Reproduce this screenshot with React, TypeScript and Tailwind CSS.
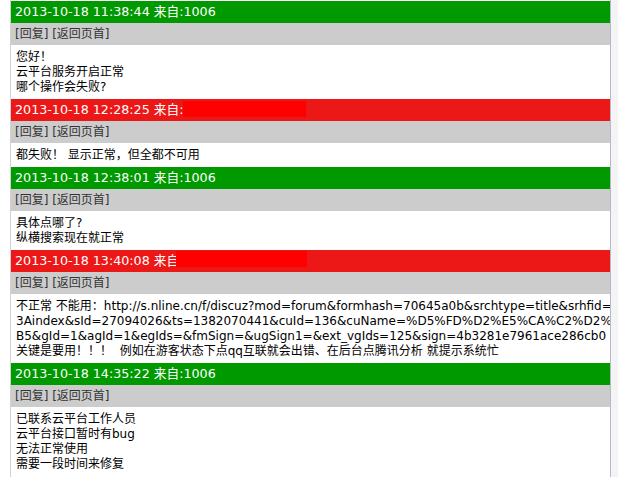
const posts = [
  {
    time: '2013-10-18 11:38:44',
    from: '1006',
    color: 'green',
    lines: ['您好！', '云平台服务开启正常', '哪个操作会失败?'],
  },
  {
    time: '2013-10-18 12:28:25',
    from: '',
    color: 'red',
    mask: 'left-[172px] top-[2px] w-[123px]',
    lines: ['都失败！ 显示正常，但全都不可用'],
  },
  {
    time: '2013-10-18 12:38:01',
    from: '1006',
    color: 'green',
    lines: ['具体点哪了?', '纵横搜索现在就正常'],
  },
  {
    time: '2013-10-18 13:40:08',
    from: '',
    color: 'red',
    mask: 'left-[165px] top-[1px] w-[131px]',
    lines: [
      '不正常 不能用：http://s.nline.cn/f/discuz?mod=forum&formhash=70645a0b&srchtype=title&srhfid=0&srhlocality=forum%3A%3Aindex',
      '3Aindex&sId=27094026&ts=1382070441&cuId=136&cuName=%D5%FD%D2%E5%CA%C2%D2%B5',
      'B5&gId=1&agId=1&egIds=&fmSign=&ugSign1=&ext_vgIds=125&sign=4b3281e7961ace286cb0',
      '关键是要用！！！  例如在游客状态下点qq互联就会出错、在后台点腾讯分析 就提示系统忙',
    ],
  },
  {
    time: '2013-10-18 14:35:22',
    from: '1006',
    color: 'green',
    lines: ['已联系云平台工作人员', '云平台接口暂时有bug', '无法正常使用', '需要一段时间来修复'],
  },
];

const font = { fontFamily: '"DejaVu Sans", "Noto Sans CJK SC", sans-serif' };

export default function App() {
  return (
    <div className="flex h-screen overflow-hidden bg-white" style={font}>
      <div className="w-[10px] shrink-0" />
      <div className="w-[600px] shrink-0 border-l border-[#d2d2d2] pt-px overflow-hidden">
        {posts.map((p) => (
          <div key={p.time}>
            <div
              className={`relative h-[22px] flex items-center px-[4px] text-[12.7px] text-white whitespace-nowrap ${
                p.color === 'green' ? 'bg-[#009900]' : 'bg-[#ec1717]'
              }`}
            >
              {p.time} 来自:{p.from}
              {p.mask && <div className={`absolute h-[16px] bg-[#ff0000] ${p.mask}`} />}
            </div>
            <div className="h-[22px] flex items-center px-[4px] bg-[#cccccc] text-[12px] text-[#333333] whitespace-nowrap">
              [回复] [返回页首]
            </div>
            <div className="pl-[5px] pt-[5px] pb-[4px] text-[12px] leading-[15px] text-black">
              {p.lines.map((l, i) => (
                <div key={i} className="whitespace-pre overflow-hidden">
                  {l}
                </div>
              ))}
            </div>
          </div>
        ))}
      </div>
      <div className="flex-1 border-l border-[#b2bacb] bg-[#f4f4f4]" />
    </div>
  );
}
